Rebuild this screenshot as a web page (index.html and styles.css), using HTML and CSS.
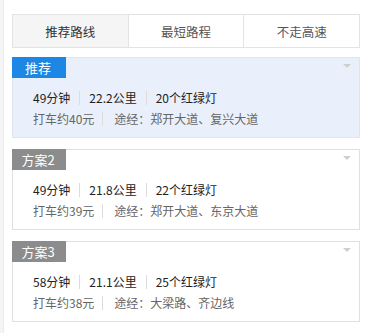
FILE: index.html
```html
<!DOCTYPE html>
<html lang="zh-CN">
<head>
<meta charset="utf-8">
<title>路线方案</title>
<link rel="stylesheet" href="styles.css">
</head>
<body>
<div class="edge"></div>
<div class="wrap">
  <div class="tabs">
    <div class="tab active">推荐路线</div>
    <div class="tab">最短路程</div>
    <div class="tab">不走高速</div>
  </div>

  <div class="card selected">
    <div class="label blue">推荐</div>
    <span class="arrow"></span>
    <div class="row main"><span>49分钟</span><i class="sep"></i><span>22.2公里</span><i class="sep"></i><span>20个红绿灯</span></div>
    <div class="row sub"><span>打车约40元</span><i class="sep"></i><span>途经：郑开大道、复兴大道</span></div>
  </div>

  <div class="card">
    <div class="label gray">方案2</div>
    <span class="arrow"></span>
    <div class="row main"><span>49分钟</span><i class="sep"></i><span>21.8公里</span><i class="sep"></i><span>22个红绿灯</span></div>
    <div class="row sub"><span>打车约39元</span><i class="sep"></i><span>途经：郑开大道、东京大道</span></div>
  </div>

  <div class="card">
    <div class="label gray">方案3</div>
    <span class="arrow"></span>
    <div class="row main"><span>58分钟</span><i class="sep"></i><span>21.1公里</span><i class="sep"></i><span>25个红绿灯</span></div>
    <div class="row sub"><span>打车约38元</span><i class="sep"></i><span>途经：大梁路、齐边线</span></div>
  </div>
</div>
</body>
</html>
```
FILE: styles.css
```css
html, body {
  margin: 0;
  padding: 0;
  background: #fff;
}
body {
  font-family: "Noto Sans CJK SC", "Noto Sans", "Liberation Sans", sans-serif;
  font-size: 12px;
  color: #333;
  position: relative;
  width: 365px;
  height: 333px;
  overflow: hidden;
}
.edge {
  position: absolute;
  left: 0;
  top: 0;
  width: 3px;
  height: 333px;
  background: #f4f4f4;
  border-right: 1px solid #ececec;
}
.wrap {
  padding: 14px 5px 0 12px;
}
.tabs {
  display: flex;
  border: 1px solid #e3e3e3;
  height: 32px;
}
.tab {
  flex: 1;
  display: flex;
  align-items: center;
  justify-content: center;
  color: #555;
  font-size: 12.5px;
  background: #fff;
}
.tab + .tab {
  border-left: 1px solid #e3e3e3;
}
.tab.active {
  background: #f5f5f5;
  color: #333;
}
.card {
  position: relative;
  margin-top: 11px;
  border: 1px solid #e0e0e0;
  background: #fff;
  padding-bottom: 8px;
}
.tabs + .card {
  margin-top: 9px;
}
.card.selected {
  background: #eaf0fb;
  border-color: #dfe5ee;
}
.label {
  display: block;
  margin: -1px 0 0 -1px;
  width: 54px;
  height: 21px;
  line-height: 21px;
  color: #fff;
  font-size: 13px;
  text-align: center;
  padding-right: 2px;
  box-sizing: border-box;
}
.label.blue { background: #1c87e4; }
.label.gray { background: #8c8c8c; }
.arrow {
  position: absolute;
  right: 8px;
  top: 6px;
  width: 0;
  height: 0;
  border-left: 4px solid transparent;
  border-right: 4px solid transparent;
  border-top: 4px solid #cfcfcf;
}
.row {
  display: flex;
  align-items: center;
  height: 21px;
  padding-left: 20px;
}
.card .row.main {
  margin-top: 9px;
  color: #222;
}
.row.sub {
  color: #666;
}
.sep {
  display: inline-block;
  width: 1px;
  height: 14px;
  background: #dcdcdc;
  margin: 0 9px 0 9px;
}
.row.sub .sep {
  margin: 0 11px 0 8px;
}
```
